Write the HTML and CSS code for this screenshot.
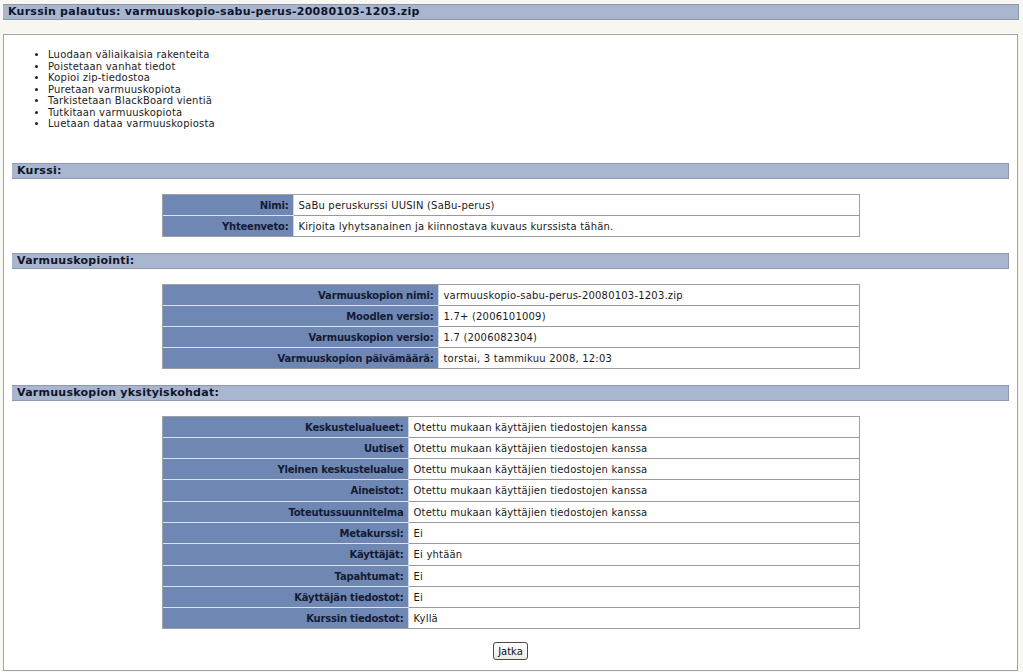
FILE: index.html
```html
<!DOCTYPE html>
<html lang="fi">
<head>
<meta charset="utf-8">
<title>Kurssin palautus</title>
<link rel="stylesheet" href="styles.css">
</head>
<body>
<div class="page">
  <h2 class="main-title">Kurssin palautus: varmuuskopio-sabu-perus-20080103-1203.zip</h2>
  <div class="box">
    <ul class="steps">
      <li>Luodaan väliaikaisia rakenteita</li>
      <li>Poistetaan vanhat tiedot</li>
      <li>Kopioi zip-tiedostoa</li>
      <li>Puretaan varmuuskopiota</li>
      <li>Tarkistetaan BlackBoard vientiä</li>
      <li>Tutkitaan varmuuskopiota</li>
      <li>Luetaan dataa varmuuskopiosta</li>
    </ul>

    <h3 class="section">Kurssi:</h3>
    <table class="info t1">
      <tr><th>Nimi:</th><td>SaBu peruskurssi UUSIN (SaBu-perus)</td></tr>
      <tr><th>Yhteenveto:</th><td>Kirjoita lyhytsanainen ja kiinnostava kuvaus kurssista tähän.</td></tr>
    </table>

    <h3 class="section">Varmuuskopiointi:</h3>
    <table class="info t2">
      <tr><th>Varmuuskopion nimi:</th><td>varmuuskopio-sabu-perus-20080103-1203.zip</td></tr>
      <tr><th>Moodlen versio:</th><td>1.7+ (2006101009)</td></tr>
      <tr><th>Varmuuskopion versio:</th><td>1.7 (2006082304)</td></tr>
      <tr><th>Varmuuskopion päivämäärä:</th><td>torstai, 3 tammikuu 2008, 12:03</td></tr>
    </table>

    <h3 class="section">Varmuuskopion yksityiskohdat:</h3>
    <table class="info t3">
      <tr><th>Keskustelualueet:</th><td>Otettu mukaan käyttäjien tiedostojen kanssa</td></tr>
      <tr><th>Uutiset</th><td>Otettu mukaan käyttäjien tiedostojen kanssa</td></tr>
      <tr><th>Yleinen keskustelualue</th><td>Otettu mukaan käyttäjien tiedostojen kanssa</td></tr>
      <tr><th>Aineistot:</th><td>Otettu mukaan käyttäjien tiedostojen kanssa</td></tr>
      <tr><th>Toteutussuunnitelma</th><td>Otettu mukaan käyttäjien tiedostojen kanssa</td></tr>
      <tr><th>Metakurssi:</th><td>Ei</td></tr>
      <tr><th>Käyttäjät:</th><td>Ei yhtään</td></tr>
      <tr><th>Tapahtumat:</th><td>Ei</td></tr>
      <tr><th>Käyttäjän tiedostot:</th><td>Ei</td></tr>
      <tr><th>Kurssin tiedostot:</th><td>Kyllä</td></tr>
    </table>

    <div class="actions">
      <button type="button" class="btn">Jatka</button>
    </div>
  </div>
</div>
</body>
</html>
```

FILE: styles.css
```css
html, body {
  margin: 0;
  padding: 0;
  background: #f8f7f2;
}

body {
  font-family: "DejaVu Sans", Verdana, sans-serif;
  font-size: 10px;
  color: #1a1a1a;
}

.page {
  padding: 4px 4px 2px 3px;
}

.main-title {
  margin: 0;
  height: 14px;
  line-height: 14px;
  padding-left: 5px;
  background: #a9b6d0;
  border-top: 1px solid #8e98ae;
  border-bottom: 1px solid #8e98ae;
  border-right: 1px solid #8e98ae;
  font-size: 11px;
  font-weight: bold;
  letter-spacing: 0.25px;
  color: #10142a;
}

.box {
  margin-top: 14px;
  margin-right: 1px;
  background: #ffffff;
  border: 1px solid #a3a3a3;
  padding: 14px 8px 10px 8px;
}

.steps {
  margin: 0 0 33px 0;
  padding-left: 36px;
  line-height: 11.5px;
  font-size: 10px;
  letter-spacing: 0.2px;
  color: #222;
}

.section {
  margin: 0 0 15px 0;
  height: 14px;
  line-height: 14px;
  padding-left: 5px;
  background: #a9b6d0;
  border-top: 1px solid #8e98ae;
  border-bottom: 1px solid #8e98ae;
  border-right: 1px solid #8e98ae;
  font-size: 11px;
  font-weight: bold;
  letter-spacing: 0.25px;
  color: #10142a;
}

.info {
  width: 698px;
  margin: 0 auto 16px auto;
  border-collapse: separate;
  border-spacing: 0;
  border: 1px solid #a0a0a0;
  font-size: 10px;
}

.info th,
.info td {
  height: 13px;
  line-height: 13px;
  padding: 4px 5px 3px 5px;
  vertical-align: middle;
}

.info th {
  background: #6f87b3;
  color: #141a33;
  font-weight: bold;
  text-align: right;
  white-space: nowrap;
  letter-spacing: -0.2px;
  padding-right: 4px;
  border-right: 1px solid #cdd5e5;
}

.info td {
  background: #ffffff;
  color: #1a1a1a;
  text-align: left;
  letter-spacing: 0.2px;
}

.info tr + tr th {
  border-top: 1px solid #dbe1ee;
}

.info tr + tr td {
  border-top: 1px solid #9a9a9a;
}

.t1 th { width: 121px; }
.t2 th { width: 266px; }
.t3 th { width: 236px; }

.t3 th,
.t3 td {
  line-height: 13.3px;
  height: 13.3px;
}

.actions {
  text-align: center;
  margin-top: -3px;
}

.btn {
  font-family: "DejaVu Sans", Verdana, sans-serif;
  font-size: 10px;
  color: #111;
  padding: 2px 4px;
  height: 18px;
  border: 1px solid #4a4a4a;
  border-radius: 3px;
  background: linear-gradient(#ffffff, #ecebe6);
}
```
